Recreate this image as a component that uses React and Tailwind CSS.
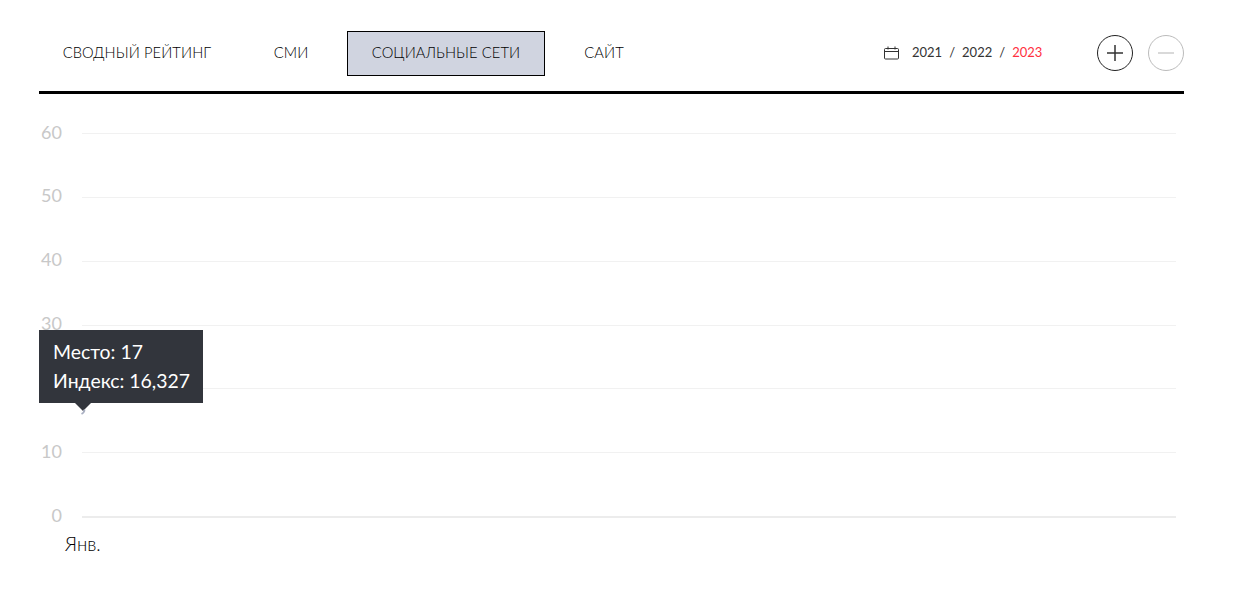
import React from "react";

const ticks = [60, 50, 40, 30, 20, 10, 0];

const tabs = [
  { title: "СВОДНЫЙ РЕЙТИНГ", width: "w-[196px]" },
  { title: "СМИ", width: "w-[112px]" },
  { title: "СОЦИАЛЬНЫЕ СЕТИ", width: "w-[198px]", active: true },
  { title: "САЙТ", width: "w-[118px]" },
];

const CalendarIcon = () => (
  <svg width="16" height="14" viewBox="0 0 16 14" fill="none" stroke="#333" strokeWidth="1">
    <rect x="0.5" y="2.5" width="14" height="10.5" rx="1" />
    <path d="M0.5 5.5h14M4 0.5v3M11 0.5v3" />
  </svg>
);

const App = () => {
  return (
    <div className="w-[1234px] h-[598px] bg-white overflow-hidden font-['Lato','Liberation_Sans',sans-serif] text-black">
      <div className="ml-[39px] w-[1145px] pt-[31px]">
        <div className="h-[60px] border-b-[3px] border-black box-content flex items-start">
          {tabs.map((tab) => (
            <div
              key={tab.title}
              className={`${tab.width} h-[45px] pb-[2px] flex items-center justify-center font-light text-[14.7px] tracking-[0.1px] text-black ${
                tab.active ? "bg-[#d0d4e0] border border-black" : ""
              }`}
            >
              {tab.title}
            </div>
          ))}
          <div className="ml-[221px] h-[45px] pb-[2px] flex items-center text-[13px] text-[#333]">
            <CalendarIcon />
            <span className="ml-[12px]">2021</span>
            <span className="mx-[7px]">/</span>
            <span>2022</span>
            <span className="mx-[7px]">/</span>
            <span className="text-[#ff3040]">2023</span>
          </div>
          <div className="ml-auto flex gap-[15px] mt-[4px]">
            <div className="w-[36px] h-[36px] rounded-full border border-[#222] flex items-center justify-center">
              <svg width="16" height="16" viewBox="0 0 16 16" stroke="#333" strokeWidth="1.5">
                <path d="M8 0v16M0 8h16" />
              </svg>
            </div>
            <div className="w-[36px] h-[36px] rounded-full border border-[#bbb] flex items-center justify-center">
              <svg width="16" height="16" viewBox="0 0 16 16" stroke="#ccc" strokeWidth="1.5">
                <path d="M0 8h16" />
              </svg>
            </div>
          </div>
        </div>

        <div className="relative mt-[34px] w-[1137px]">
          <div className="flex flex-col gap-[52.85px]">
            {ticks.map((tick) => (
              <div key={tick} className="h-[11px] flex items-center">
                <span className="w-[23px] mr-[20px] pb-[3px] text-right text-[18px] leading-[11px] text-[#c8c8c8]">{tick}</span>
                <div className={`flex-1 ${tick === 0 ? "h-[2px] bg-[#ececec]" : "h-px bg-[#f1f1f1]"}`} />
              </div>
            ))}
          </div>
          <div className="ml-[26px] mt-[12px] font-light text-[18.6px] leading-[20px] text-black">Янв.</div>

          <div className="absolute left-0 top-[202px] w-[164px] h-[73px] bg-[#32353c] text-white text-[19.4px] leading-[29px] px-[14px] py-[7px]">
            <div>Место: 17</div>
            <div className="whitespace-nowrap">Индекс: 16,327</div>
            <div className="absolute left-[36px] top-[73px] w-0 h-0 border-x-[8px] border-x-transparent border-t-[8px] border-t-[#32353c]" />
            <svg className="absolute left-[41px] top-[79px]" width="6" height="6" viewBox="0 0 6 6" fill="none" stroke="#aab0c2" strokeWidth="1.8">
              <path d="M4.5 0.5c0 2-1 3.5-3 4.5" />
            </svg>
          </div>
        </div>
      </div>
    </div>
  );
};

export default App;
